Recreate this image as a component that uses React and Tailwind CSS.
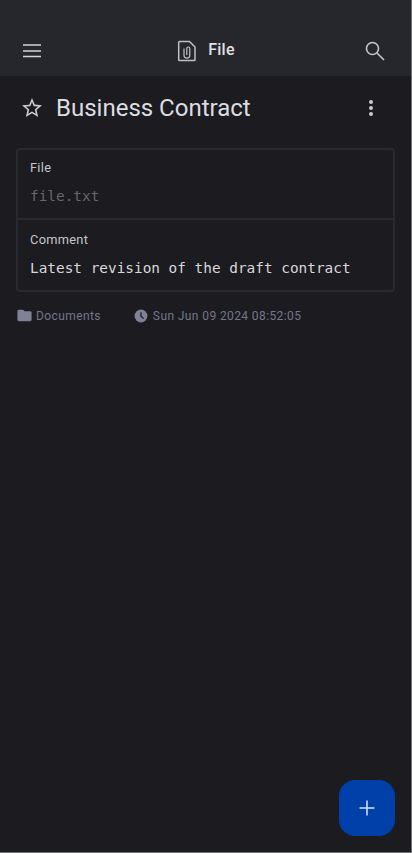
function MenuIcon() {
  return (
    <svg width="24" height="24" viewBox="0 0 24 24" fill="none" stroke="#d4d5d9" strokeWidth="1.5">
      <path d="M3 6h18M3 12h18M3 17.500h18" />
    </svg>
  );
}

function SearchIcon() {
  return (
    <svg width="24" height="24" viewBox="0 0 24 24" fill="none" stroke="#c4c5c9" strokeWidth="1.6">
      <circle cx="9.500" cy="9.500" r="6" />
      <path d="M14 14l7 7" />
    </svg>
  );
}

function FileClipIcon() {
  return (
    <svg width="24" height="24" viewBox="0 0 24 24" fill="none" stroke="#bfc0c5" strokeWidth="1.5">
      <path d="M4.500 2.500h10l5.500 5.500v12.700a.8.8 0 0 1-.8.8H4.500a.8.8 0 0 1-.8-.8V3.300a.8.8 0 0 1 .8-.8z" />
      <path d="M9 9.500v6.700a2.900 2.900 0 0 0 5.800 0V9.500a1.500 1.500 0 0 0-3 0v6.500" strokeWidth="1.200" />
    </svg>
  );
}

function StarIcon() {
  return (
    <svg width="24" height="24" viewBox="0 0 24 24" fill="#c9cacf">
      <path d="M22 9.240l-7.190-.62L12 2 9.190 8.630 2 9.240l5.460 4.730L5.820 21 12 17.270 18.180 21l-1.630-7.030L22 9.240zM12 15.400l-3.760 2.270 1-4.280-3.320-2.880 4.380-.38L12 6.100l1.710 4.040 4.380.38-3.320 2.880 1 4.280L12 15.400z" />
    </svg>
  );
}

function MoreIcon() {
  return (
    <svg width="24" height="24" viewBox="0 0 24 24" fill="#c9cacf">
      <circle cx="12" cy="6" r="2" />
      <circle cx="12" cy="12" r="2" />
      <circle cx="12" cy="18" r="2" />
    </svg>
  );
}

function FolderIcon() {
  return (
    <svg width="17" height="17" viewBox="0 0 24 24" fill="#7e8296">
      <path d="M10 4H4a2 2 0 0 0-2 2v12a2 2 0 0 0 2 2h16a2 2 0 0 0 2-2V8a2 2 0 0 0-2-2h-8z" />
    </svg>
  );
}

function ClockIcon() {
  return (
    <svg width="14" height="14" viewBox="0 0 24 24">
      <circle cx="12" cy="12" r="11" fill="#7e8296" />
      <path d="M12 5.500V12.500L16.500 16.500" fill="none" stroke="#1b1b20" strokeWidth="2.200" />
    </svg>
  );
}

function PlusIcon() {
  return (
    <svg width="24" height="24" viewBox="0 0 24 24" fill="none" stroke="#d8e2ff" strokeWidth="1.500">
      <path d="M4.500 12h15M12 4.500v15" />
    </svg>
  );
}

export default function App() {
  return (
    <div className="h-[853px] bg-[#6f7074] font-['Roboto',sans-serif] overflow-hidden">
      <div className="flex flex-col w-[411px] h-[852px] bg-[#1b1b20]">
        {/* Top bar */}
        <header className="h-[76px] shrink-0 bg-[#25272d] pt-[25px] pl-5 pr-6 flex items-center justify-between">
          <MenuIcon />
          <div className="flex items-center gap-[9px] ml-[3px]">
            <FileClipIcon />
            <span className="-mt-[2px] text-base font-medium tracking-[0.2px] text-[#dfe0e3]">File</span>
          </div>
          <SearchIcon />
        </header>

        {/* Title */}
        <div className="flex items-center justify-between pl-5 pr-7 h-[64px] shrink-0">
          <div className="flex items-center gap-[12px]">
            <StarIcon />
            <h1 className="text-2xl text-[#dcdde0]">Business Contract</h1>
          </div>
          <MoreIcon />
        </div>

        {/* Details */}
        <div className="mx-4 mt-2 w-[379px] border-2 border-[#282a30] rounded-[4px]">
          <div className="h-[70px] px-3 pt-[10px] border-b-2 border-[#282a30]">
            <div className="text-[12.8px] leading-4 tracking-[0.3px] text-[#c4c5c9]">File</div>
            <div className="mt-[10px] text-[14.4px] leading-5 text-[#66676a] font-['DejaVu_Sans_Mono',monospace]">file.txt</div>
          </div>
          <div className="h-[70px] px-3 pt-[12px]">
            <div className="text-[12.8px] leading-4 tracking-[0.3px] text-[#c4c5c9]">Comment</div>
            <div className="mt-[10px] text-[14.4px] leading-5 text-[#d8d9dc] font-['DejaVu_Sans_Mono',monospace]">Latest revision of the draft contract</div>
          </div>
        </div>

        {/* Meta */}
        <div className="mt-[15px] mx-4 flex items-center text-xs text-[#74778a] tracking-[0.4px]">
          <FolderIcon />
          <span className="ml-[3px]">Documents</span>
          <span className="ml-[33px]"><ClockIcon /></span>
          <span className="ml-[5px]">Sun Jun 09 2024 08:52:05</span>
        </div>

        {/* FAB */}
        <div className="mt-auto flex justify-end pr-4 pb-4">
          <button className="w-14 h-14 rounded-2xl bg-[#0040a8] flex items-center justify-center">
            <PlusIcon />
          </button>
        </div>
      </div>
    </div>
  );
}
